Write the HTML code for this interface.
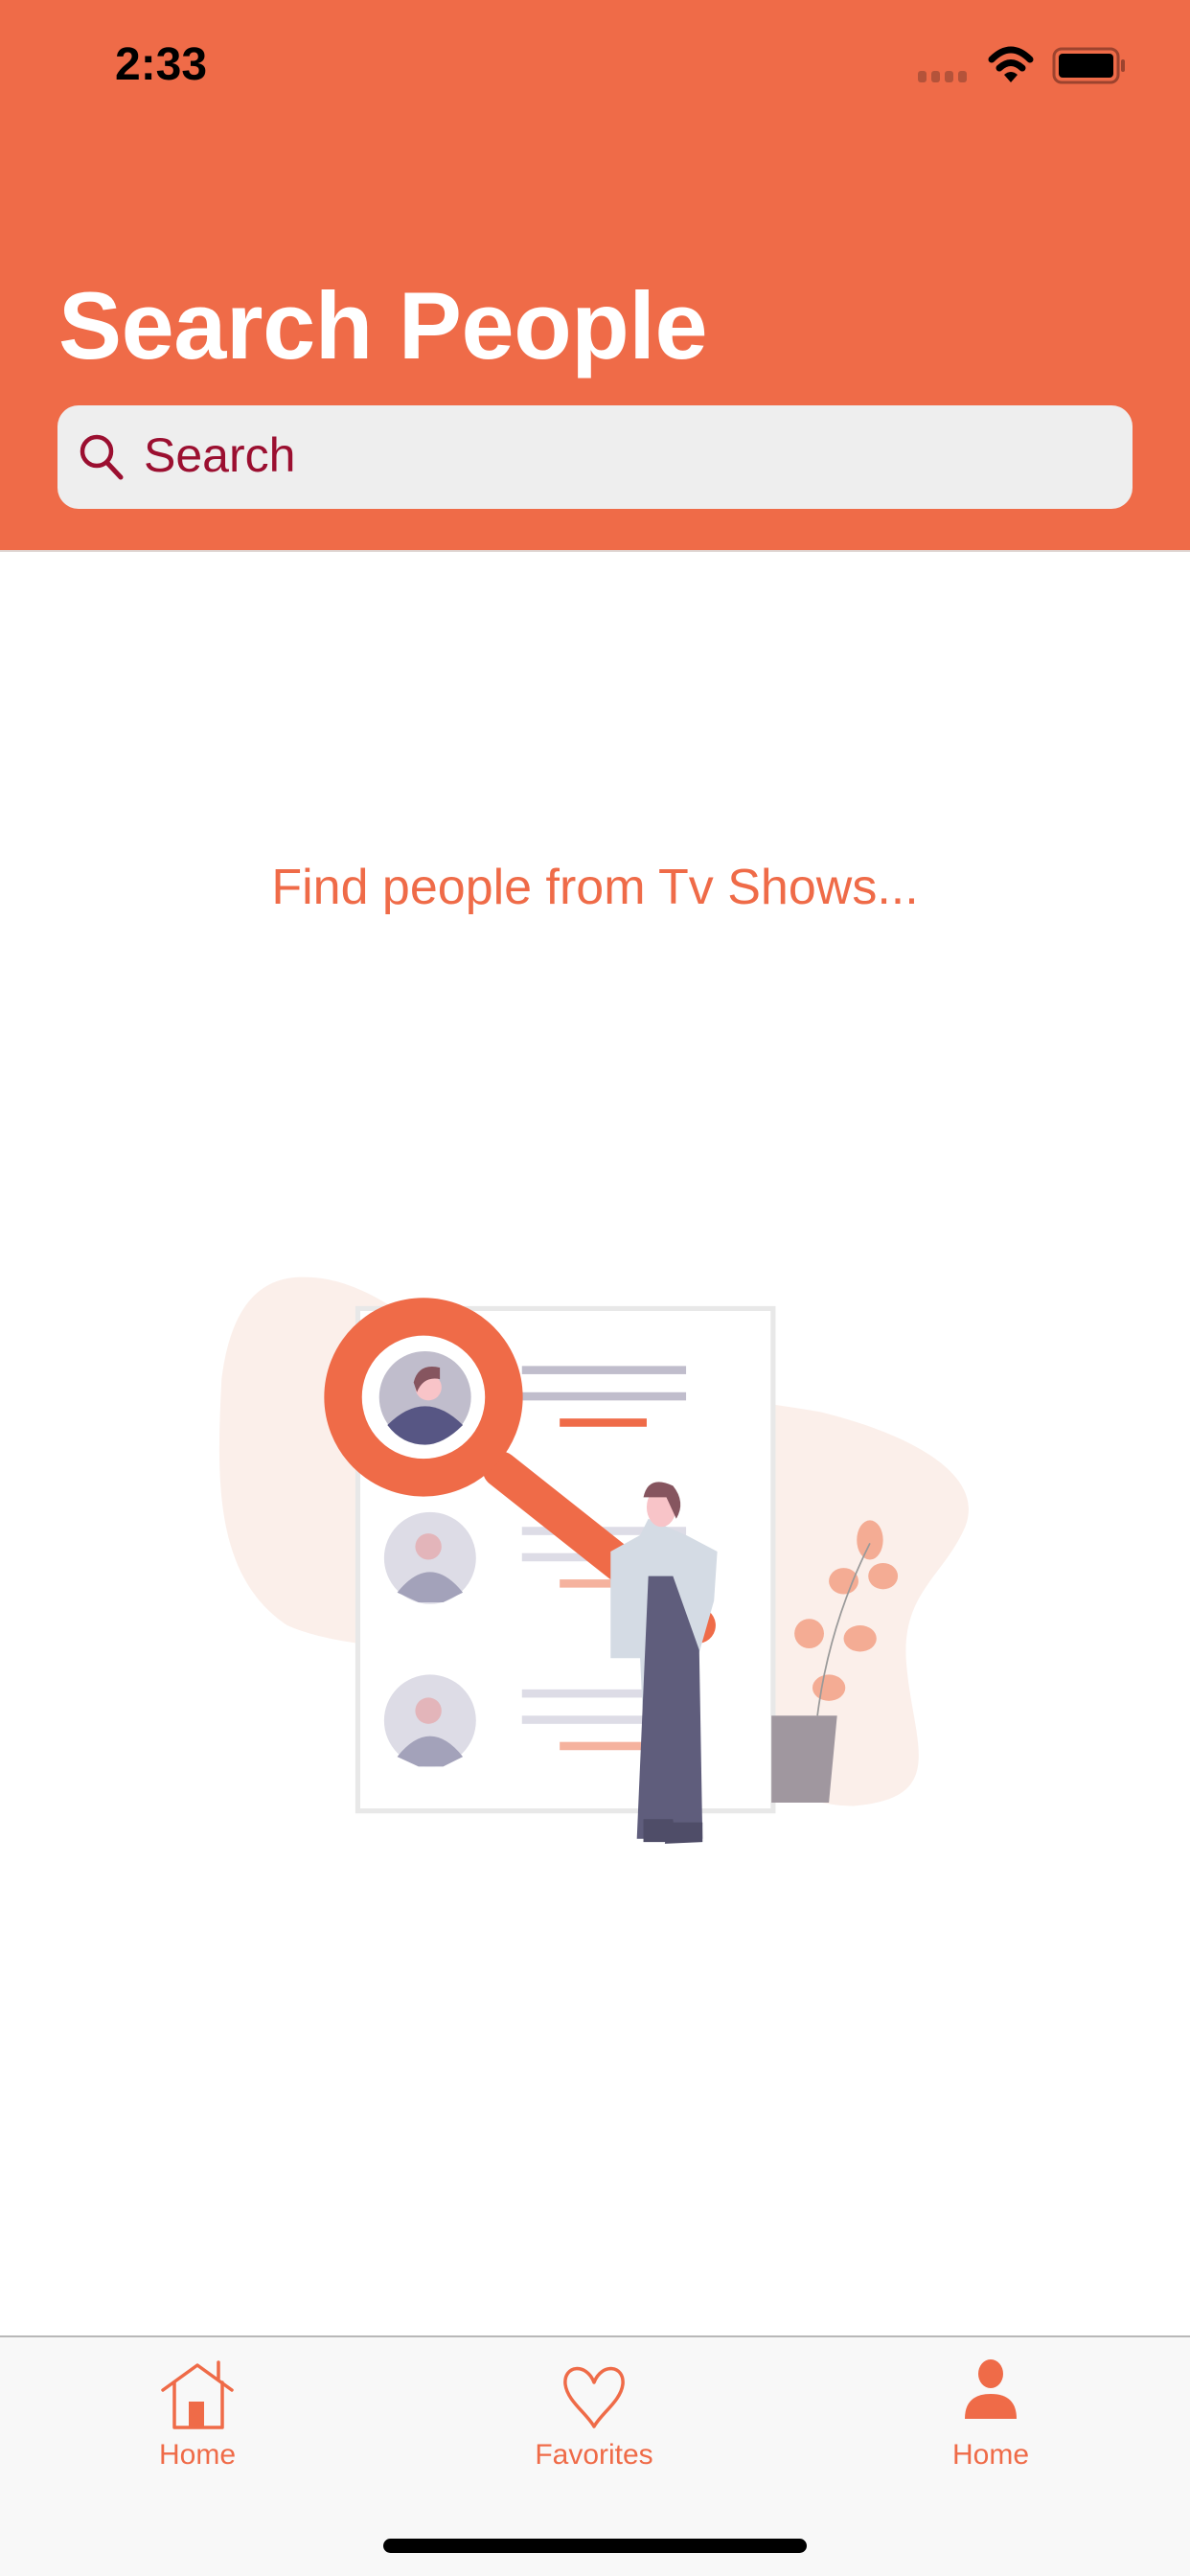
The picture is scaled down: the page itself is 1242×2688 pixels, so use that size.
<!DOCTYPE html>
<html><head><meta charset="utf-8"><style>
*{margin:0;padding:0;box-sizing:border-box}
body{width:1242px;height:2688px;position:relative;background:#fff;font-family:"Liberation Sans",sans-serif;overflow:hidden}
.hdr{position:absolute;left:0;top:0;width:1242px;height:576px;background:#EF6B48;border-bottom:2px solid #e0d8d5}
.time{position:absolute;left:120px;top:40px;font-size:48px;font-weight:bold;color:#000}
.title{position:absolute;left:61px;top:283px;font-size:99px;font-weight:bold;color:#fff;letter-spacing:-0.4px}
.sb{position:absolute;left:60px;top:423px;width:1122px;height:108px;background:#eeeeee;border-radius:22px}
.sb span{position:absolute;left:90px;top:23px;font-size:50px;color:#9b0f30}
.find{position:absolute;left:0;width:1242px;top:896px;text-align:center;font-size:52px;color:#EF6B48}
.tab{position:absolute;left:0;top:2437px;width:1242px;height:251px;background:#f8f8f8;border-top:2px solid #b8b8b8}
.lbl{position:absolute;top:2545px;font-size:30px;color:#EF6B48;width:300px;text-align:center}
.ind{position:absolute;left:400px;top:2649px;width:442px;height:15px;background:#000;border-radius:8px}
</style></head><body>
<div class="hdr"></div>
<div class="time">2:33</div>
<svg style="position:absolute;left:0;top:0" width="1242" height="120">
<g fill="#b4533a"><rect x="958" y="74" width="9" height="12" rx="3"/><rect x="972" y="74" width="9" height="12" rx="3"/><rect x="986" y="74" width="9" height="12" rx="3"/><rect x="1000" y="74" width="9" height="12" rx="3"/></g>
<g fill="none" stroke="#000" stroke-width="7" stroke-linecap="round"><path d="M1035 62 Q1055 42 1075 62"/><path d="M1043 71 Q1055 60 1067 71"/></g>
<path d="M1048 78 L1055 86 L1062 78 Q1055 72 1048 78Z" fill="#000"/>
<rect x="1100" y="51" width="67" height="35" rx="8" fill="none" stroke="#9c432e" stroke-width="3"/>
<rect x="1105" y="56" width="57" height="25" rx="4" fill="#000"/>
<rect x="1170" y="62" width="4" height="13" rx="2" fill="#9c432e"/>
</svg>
<div class="title">Search People</div>
<div class="sb"><svg style="position:absolute;left:22px;top:29px" width="50" height="50"><circle cx="19" cy="19" r="15" fill="none" stroke="#9b0f30" stroke-width="4.5"/><line x1="30" y1="31" x2="44" y2="46" stroke="#9b0f30" stroke-width="5" stroke-linecap="round"/></svg><span>Search</span></div>
<div class="find">Find people from Tv Shows...</div>
<svg style="position:absolute;left:0;top:0" width="1242" height="2688" viewBox="0 0 725 1569">
<path d="M180 778 C230 775 260 820 300 830 C380 845 440 850 500 860 C560 875 600 900 588 930 C575 960 550 970 552 1010 C555 1060 580 1095 520 1100 C470 1100 440 1060 380 1030 C300 1000 220 1010 175 990 C130 960 132 900 135 840 C140 800 155 780 180 778Z" fill="#fbefea"/>
<rect x="218" y="797" width="253" height="306" fill="#fff" stroke="#e8e8e8" stroke-width="3"/>
<g fill="#c0bdcc"><rect x="318" y="832" width="100" height="5"/><rect x="318" y="848" width="100" height="5"/></g>
<rect x="341" y="864" width="53" height="5" fill="#EF6B48"/>
<g fill="#dddce6"><rect x="318" y="930" width="100" height="5"/><rect x="318" y="946" width="100" height="5"/><rect x="318" y="1029" width="100" height="5"/><rect x="318" y="1045" width="100" height="5"/></g>
<g fill="#f5b29e"><rect x="341" y="962" width="53" height="5"/><rect x="341" y="1061" width="53" height="5"/></g>
<ellipse cx="262" cy="949" rx="28" ry="28" fill="#dddce6"/><path d="M242 970 Q262 945 282 970 L270 976 L255 976Z" fill="#a3a2ba"/><circle cx="261" cy="942" r="8" fill="#e3b5ba"/>
<ellipse cx="262" cy="1048" rx="28" ry="28" fill="#dddce6"/><path d="M242 1070 Q262 1045 282 1070 L270 1076 L255 1076Z" fill="#a3a2ba"/><circle cx="261" cy="1042" r="8" fill="#e3b5ba"/>
<path d="M470 1045 L510 1045 L505 1098 L470 1098Z" fill="#a0979f"/>
<g fill="#f4ac94"><ellipse cx="530" cy="938" rx="8" ry="12"/><ellipse cx="538" cy="960" rx="9" ry="8"/><ellipse cx="514" cy="963" rx="9" ry="8"/><ellipse cx="524" cy="998" rx="10" ry="8"/><ellipse cx="493" cy="995" rx="9" ry="9"/><ellipse cx="505" cy="1028" rx="10" ry="8"/></g>
<path d="M498 1045 Q505 990 530 940" fill="none" stroke="#999" stroke-width="1"/>
<path d="M305 895 L425 990" stroke="#EF6B48" stroke-width="22" stroke-linecap="round"/>
<circle cx="258" cy="851" r="49" fill="none" stroke="#EF6B48" stroke-width="23"/>
<circle cx="259" cy="851" r="28" fill="#c0bdcc"/>
<path d="M236 868 Q259 845 282 868 Q270 880 259 880 Q245 880 236 868Z" fill="#575684"/>
<circle cx="261" cy="845" r="8" fill="#f8c4c8"/><path d="M252 842 Q255 830 268 833 L268 840 Q258 838 254 848Z" fill="#86555f"/>
<path d="M395 925 L390 935 L372 945 L372 1010 L390 1010 L395 1120 L428 1120 L425 1010 L435 975 L437 945 L418 935 Z" fill="#d4dbe4"/>
<path d="M395 960 L388 1120 L428 1120 L426 1005 L410 960Z" fill="#5f5d7c"/>
<ellipse cx="403" cy="918" rx="9" ry="12" fill="#f8c4c8"/>
<path d="M392 912 Q395 898 410 905 Q418 915 412 925 L406 912 Z" fill="#86555f"/>
<path d="M392 1108 L410 1108 L412 1122 L392 1122Z M408 1110 L428 1110 L428 1122 L405 1123Z" fill="#4f4d68"/>
</svg>
<div class="tab"></div>
<svg style="position:absolute;left:0;top:2460px" width="1242" height="80">
<g fill="none" stroke="#EF6B48" stroke-width="3.5" stroke-linejoin="round" stroke-linecap="round">
<path d="M170 34 L206 8 L242 34"/><path d="M182 26 L182 73 L232 73 L232 26"/><path d="M228 22 L228 5"/>
<path d="M620 26 C612 5 588 8 590 28 C592 45 612 58 620 72 C628 58 648 45 650 28 C652 8 628 5 620 26Z"/>
</g>
<rect x="197" y="46" width="16" height="27" fill="#EF6B48"/>
<ellipse cx="1034" cy="17" rx="13" ry="15" fill="#EF6B48"/>
<path d="M1007 64 Q1007 38 1034 38 Q1061 38 1061 64Z" fill="#EF6B48"/>
</svg>
<div class="lbl" style="left:56px">Home</div>
<div class="lbl" style="left:470px">Favorites</div>
<div class="lbl" style="left:884px">Home</div>
<div class="ind"></div>
</body></html>
